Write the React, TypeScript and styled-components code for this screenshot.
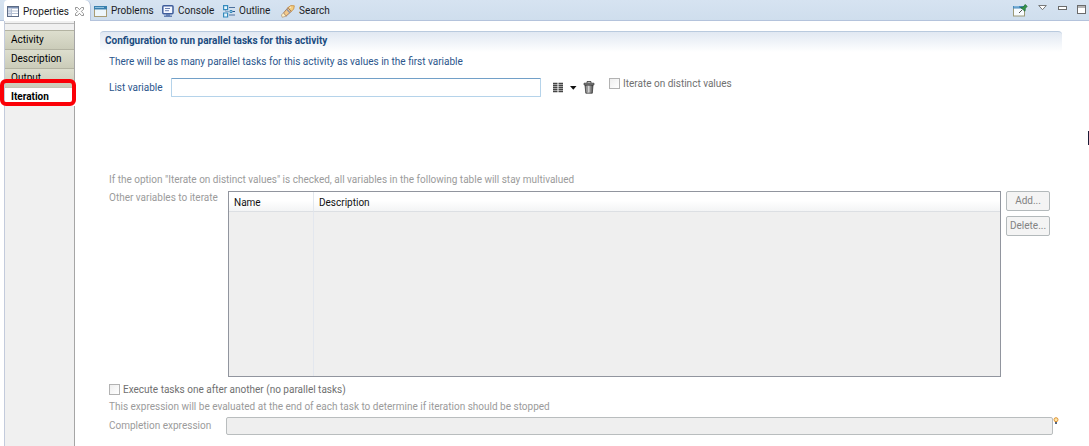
import React from "react";
import styled, { createGlobalStyle } from "styled-components";

const GlobalStyle = createGlobalStyle`
  *, *::before, *::after { box-sizing: border-box; }
  html, body { margin: 0; background: #ffffff; }
  body, button, input, table { font-family: Roboto, "Open Sans", sans-serif; font-size: 10px; line-height: 14px; }
  p, h1, ul { margin: 0; padding: 0; }
`;

const View = styled.div`
  display: flex;
  flex-direction: column;
  min-height: 100vh;
  position: relative;
  overflow: hidden;
`;

const TabBar = styled.header`
  display: flex;
  align-items: stretch;
  height: 21px;
  padding-left: 4px;
  background: linear-gradient(#d6e3f1, #cfdeed);
  border-bottom: 1px solid #b4c3dc;
`;

const Tabs = styled.nav`
  display: flex;
  align-items: stretch;
`;

const Tab = styled.button<{ $active?: boolean; $width: number }>`
  display: flex;
  align-items: center;
  gap: 4px;
  width: ${(p) => p.$width}px;
  height: ${(p) => (p.$active ? 21 : 20)}px;
  padding: 2px 0 0 3px;
  border: 0;
  border-right: ${(p) => (p.$active ? "1px solid #b4c3dc" : "0")};
  border-radius: 4px 6px 0 0;
  background: ${(p) => (p.$active ? "#ffffff" : "transparent")};
  color: #1c1c24;
  white-space: nowrap;
  svg { flex: none; }
  svg:last-child { margin-left: 2px; }
`;

const ViewActions = styled.div`
  display: flex;
  align-items: flex-start;
  margin-left: auto;
  padding: 4px 2px 0 0;
  gap: 10px;
`;

const IconButton = styled.button`
  display: flex;
  flex: none;
  padding: 0;
  border: 0;
  background: transparent;
  svg { display: block; }
`;

const Body = styled.div`
  display: flex;
  flex: 1;
`;

const Sidebar = styled.nav`
  flex: none;
  width: 71px;
  margin-left: 4px;
  padding-top: 2px;
  border-left: 1px solid #c3cbdc;
  border-right: 1px solid #a5a5a5;
  background: #f0f0f0;
`;

const SideList = styled.ul`
  list-style: none;
  border-top: 1px solid #bdbdbd;
`;

const SideItem = styled.li`
  position: relative;
  &:first-child { margin-top: 6px; }
`;

const SideButton = styled.button<{ $active?: boolean }>`
  display: block;
  width: ${(p) => (p.$active ? 70 : 69)}px;
  height: 19px;
  padding: 0 0 0 6px;
  border: 0;
  border-top: 1px solid ${(p) => (p.$active ? "#c4c4b4" : "#b3b3a2")};
  background: ${(p) => (p.$active ? "#ffffff" : "linear-gradient(#dddece, #cbccb9)")};
  color: #000000;
  font-weight: ${(p) => (p.$active ? 700 : 400)};
  text-align: left;
`;

const Highlight = styled.span`
  position: absolute;
  inset: -8px -2px 0 -5px;
  border: 4px solid #fb0007;
  border-radius: 6px;
  pointer-events: none;
`;

const Main = styled.main`
  flex: 1;
  min-width: 0;
  padding: 10px 27px 0 25px;
`;

const SectionTitle = styled.h1`
  height: 21px;
  padding: 2px 0 0 5px;
  border-top: 1px solid #b9cade;
  border-radius: 4px 4px 0 0;
  background: linear-gradient(#e1e8f2, #ffffff);
  color: #1b4c80;
  font-size: 10px;
  font-weight: 700;
  line-height: 14px;
`;

const Form = styled.form`
  padding: 3px 0 0 9px;
`;

const Line = styled.p<{ $muted?: boolean }>`
  color: ${(p) => (p.$muted ? "#9b9b9b" : "#2b568c")};
`;

const VariableRow = styled.div`
  display: flex;
  align-items: center;
  height: 19px;
  margin: 9px 0 76px;
`;

const Label = styled.label<{ $muted?: boolean; $width: number }>`
  flex: none;
  width: ${(p) => p.$width}px;
  color: ${(p) => (p.$muted ? "#9b9b9b" : "#2b568c")};
  white-space: nowrap;
`;

const ListInput = styled.input`
  flex: 0 1 370px;
  min-width: 0;
  height: 19px;
  padding: 0 4px;
  border: 1px solid #b5d3ea;
  border-top-color: #72a0c8;
  border-radius: 1px;
  background: #ffffff;
`;

const Tools = styled.div`
  display: flex;
  align-items: center;
  gap: 6px;
  margin: 0 14px 0 11px;
`;

const CheckLabel = styled.label<{ $raised?: boolean }>`
  display: flex;
  align-items: center;
  gap: 3px;
  align-self: ${(p) => (p.$raised ? "flex-start" : "auto")};
  height: 11px;
  color: #707070;
`;

const CheckBox = styled.input`
  appearance: none;
  width: 11px;
  height: 11px;
  margin: 0;
  border: 1px solid #b2b2b2;
  background: linear-gradient(135deg, #eeeeee, #ffffff);
`;

const TableRow = styled.div`
  display: flex;
  align-items: flex-start;
  margin: 4px 12px 7px 0;
`;

const TableFrame = styled.div`
  flex: 1;
  height: 186px;
  border: 1px solid #91959e;
  background: #efefef;
`;

const Table = styled.table`
  width: 100%;
  height: 100%;
  table-layout: fixed;
  border-collapse: separate;
  border-spacing: 0;
  th {
    height: 20px;
    padding: 2px 5px 0;
    border-right: 1px solid #e3e8ee;
    border-bottom: 1px solid #dcdfe3;
    background: linear-gradient(#ffffff 45%, #f3f4f5);
    color: #111111;
    font-weight: 400;
    text-align: left;
  }
  th:first-child { width: 85px; }
  td { border-right: 1px solid #e3e7ee; padding: 0; }
  th:last-child, td:last-child { border-right: 0; }
`;

const ButtonColumn = styled.div`
  display: flex;
  flex-direction: column;
  gap: 5px;
  width: 44px;
  margin-left: 5px;
`;

const PushButton = styled.button`
  height: 20px;
  padding: 0;
  border: 1px solid #b3b9bb;
  border-radius: 2px;
  background: #f4f4f4;
  color: #838383;
  white-space: nowrap;
`;

const ExpressionRow = styled.div`
  display: flex;
  align-items: center;
  margin: 3px 3px 0 0;
`;

const ExpressionInput = styled.input`
  flex: 1;
  min-width: 0;
  height: 18px;
  border: 1px solid #b9bdbe;
  border-radius: 2px;
  background: #efefef;
`;

const Bulb = styled.svg`
  align-self: flex-start;
  flex: none;
`;

const CheckRow = styled.div`
  margin-bottom: 5px;
`;

const EdgeMark = styled.span`
  position: absolute;
  top: 131px;
  right: 0;
  width: 1px;
  height: 14px;
  background: #1c1c38;
`;

const PropertiesIcon = () => (
  <svg width="12" height="11" viewBox="0 0 12 11" aria-hidden="true">
    <rect x=".5" y=".5" width="11" height="10" fill="#fff" stroke="#5d6c86" />
    <path d="M1 1h10v1.5H1z" fill="#7c91b5" />
    <path d="M1 2.5h3V10H1z" fill="#d7dfed" />
    <path d="M4.5 2.5V10M1 5h10M1 7.5h10" stroke="#b5c0d3" fill="none" />
  </svg>
);
const CloseIcon = () => (
  <svg width="9" height="9" viewBox="0 0 9 9" aria-hidden="true">
    <path d="M.5.5h2l2 2.2 2-2.2h2v1.8L6.3 4.5l2.2 2.2v1.8h-2l-2-2.2-2 2.2h-2V6.7l2.2-2.2L.5 2.3z" fill="#fff" stroke="#7b7b7b" strokeWidth=".8" />
  </svg>
);
const ProblemsIcon = () => (
  <svg width="13" height="11" viewBox="0 0 13 11" aria-hidden="true">
    <rect x=".5" y=".5" width="12" height="10" fill="#fff" stroke="#a99c74" />
    <path d="M0 0h13v3.5H0z" fill="#397fae" />
    <path d="M1 1h9v.8H1z" fill="#a6d2ec" />
    <path d="M1 4h11v6H1z" fill="#eef6fb" />
  </svg>
);
const ConsoleIcon = () => (
  <svg width="12" height="12" viewBox="0 0 12 12" aria-hidden="true">
    <rect x=".8" y=".8" width="10.2" height="8" rx="1" fill="#f3f7ff" stroke="#3e5d9b" strokeWidth="1.5" />
    <path d="M3 3.5h5M3 5.7h4" stroke="#6a7fae" />
    <path d="M4 9h4v1.5h2V12H2v-1.5h2z" fill="#6480b3" />
  </svg>
);
const OutlineIcon = () => (
  <svg width="12" height="13" viewBox="0 0 12 13" aria-hidden="true">
    <path d="M.6.6h4v4h-4zM.6 8h4v4h-4z" fill="#e6f5fc" stroke="#348abd" strokeWidth="1.2" />
    <path d="M6 2.5h6M6 10h6" stroke="#4d719d" fill="none" />
    <path d="M2.5 5v1.5H6" stroke="#8aa8c8" fill="none" />
    <path d="M7 5.5h2v2H7z" fill="#c7e7f6" stroke="#358abb" />
    <path d="M9.5 6.5H12" stroke="#27568d" />
  </svg>
);
const SearchIcon = () => (
  <svg width="14" height="13" viewBox="0 0 14 13" aria-hidden="true">
    <path d="M7 2.6 9.8.6 13.3.8 12.7 4 10.2 6.5z" fill="#f4cf82" stroke="#c6893a" strokeWidth=".8" />
    <path d="M7 2.6 10.2 6.5 5 11.2 2.5 8z" fill="#f3c98a" stroke="#976b47" strokeWidth=".8" />
    <path d="m5.8 4.3 3.2 3.6" stroke="#8b93a8" strokeWidth="1.4" />
    <path d="m2.5 8-2.1 1.8.8 2.5 3.8-1.1z" fill="#fff2c6" stroke="#b29b81" strokeWidth=".8" />
    <path d="m8.5 3 1.2-.9" stroke="#fff" />
  </svg>
);
const PinIcon = () => (
  <svg width="15" height="13" viewBox="0 0 15 13" aria-hidden="true">
    <rect x=".5" y="2.5" width="11" height="9.5" fill="#f8fcff" stroke="#9c9a78" />
    <path d="M0 2h12v2.5H0z" fill="#4789bc" />
    <path d="M1 2.5h5v.8H1z" fill="#b5daf0" />
    <path d="m6 9 3-3" stroke="#555" />
    <path d="m7.5 3.5 3-.5L12 .5l2.2 1.8-1.8 2-.4 2.9z" fill="#36964b" stroke="#1a6832" strokeWidth=".7" />
  </svg>
);
const MenuIcon = () => (
  <svg width="9" height="7" viewBox="0 0 9 7" aria-hidden="true">
    <path d="M.7 1.5h7.6L4.5 5.7z" fill="#fff" stroke="#6b6b6b" strokeWidth=".9" />
  </svg>
);
const MinimizeIcon = () => (
  <svg width="10" height="6" viewBox="0 0 10 6" aria-hidden="true">
    <rect x="1.5" y="2.5" width="8" height="3" fill="#fff" stroke="#6b6b6b" />
  </svg>
);
const MaximizeIcon = () => (
  <svg width="10" height="11" viewBox="0 0 10 11" aria-hidden="true">
    <rect x=".5" y="1.5" width="8" height="8" fill="#fff" stroke="#6b6b6b" />
    <path d="M.5 3H9" stroke="#6b6b6b" />
  </svg>
);
const ColumnsIcon = () => (
  <svg width="12" height="11" viewBox="0 0 12 11" aria-hidden="true">
    <path d="M1 1.5h4.5M6.5 1.5H11M1 3.5h4.5M6.5 3.5H11M1 5.5h4.5M6.5 5.5H11M1 7.5h4.5M6.5 7.5H11M1 9.5h4.5M6.5 9.5H11" stroke="#444" strokeWidth="1.3" />
  </svg>
);
const ArrowIcon = () => (
  <svg width="7" height="4" viewBox="0 0 7 4" aria-hidden="true">
    <path d="M0 0h6.5L3.3 3.8z" fill="#111" />
  </svg>
);
const TrashIcon = () => (
  <svg width="12" height="13" viewBox="0 0 12 13" aria-hidden="true">
    <defs>
      <linearGradient id="can">
        <stop offset="0" stopColor="#555" />
        <stop offset=".4" stopColor="#ddd" />
        <stop offset="1" stopColor="#444" />
      </linearGradient>
    </defs>
    <path d="M2 4h8l-.7 8.2H2.8z" fill="url(#can)" stroke="#3b3b3b" strokeWidth=".8" />
    <path d="M4.5 5v6M8 5v6" stroke="#777" strokeWidth=".5" />
    <path d="M1 2.2h10v1.7H1z" fill="#888" stroke="#333" strokeWidth=".7" />
    <path d="M4 1.8V.7h4v1.1" fill="none" stroke="#333" />
  </svg>
);

const sections = ["Activity", "Description", "Output", "Iteration"];

export default function App() {
  return (
    <>
      <GlobalStyle />
      <View>
        <TabBar>
          <Tabs aria-label="Views">
            <Tab $active $width={87}><PropertiesIcon />Properties<CloseIcon /></Tab>
            <Tab $width={68}><ProblemsIcon /><span>Problems</span></Tab>
            <Tab $width={61}><ConsoleIcon /><span>Console</span></Tab>
            <Tab $width={58}><OutlineIcon /><span>Outline</span></Tab>
            <Tab $width={56}><SearchIcon /><span>Search</span></Tab>
          </Tabs>
          <ViewActions>
            <IconButton aria-label="Pin to selection"><PinIcon /></IconButton>
            <IconButton aria-label="View menu"><MenuIcon /></IconButton>
            <IconButton aria-label="Minimize"><MinimizeIcon /></IconButton>
            <IconButton aria-label="Maximize"><MaximizeIcon /></IconButton>
          </ViewActions>
        </TabBar>
        <Body>
          <Sidebar aria-label="Property sections">
            <SideList>
              {sections.map((name) => (
                <SideItem key={name}>
                  <SideButton $active={name === "Iteration"}>{name}</SideButton>
                  {name === "Iteration" && <Highlight />}
                </SideItem>
              ))}
            </SideList>
          </Sidebar>
          <Main>
            <SectionTitle>Configuration to run parallel tasks for this activity</SectionTitle>
            <Form onSubmit={(e) => e.preventDefault()}>
              <Line>There will be as many parallel tasks for this activity as values in the first variable</Line>
              <VariableRow>
                <Label htmlFor="list" $width={62}>List variable</Label>
                <ListInput id="list" type="text" />
                <Tools>
                  <IconButton type="button" aria-label="Choose list"><ColumnsIcon /></IconButton>
                  <IconButton type="button" aria-label="More choices"><ArrowIcon /></IconButton>
                  <IconButton type="button" aria-label="Clear"><TrashIcon /></IconButton>
                </Tools>
                <CheckLabel $raised><CheckBox type="checkbox" />Iterate on distinct values</CheckLabel>
              </VariableRow>
              <Line $muted>If the option "Iterate on distinct values" is checked, all variables in the following table will stay multivalued</Line>
              <TableRow>
                <Label as="span" $muted $width={119}>Other variables to iterate</Label>
                <TableFrame>
                  <Table aria-label="Other variables to iterate">
                    <thead><tr><th>Name</th><th>Description</th></tr></thead>
                    <tbody><tr><td /><td /></tr></tbody>
                  </Table>
                </TableFrame>
                <ButtonColumn>
                  <PushButton type="button" disabled>Add...</PushButton>
                  <PushButton type="button" disabled>Delete...</PushButton>
                </ButtonColumn>
              </TableRow>
              <CheckRow>
                <CheckLabel><CheckBox type="checkbox" />Execute tasks one after another (no parallel tasks)</CheckLabel>
              </CheckRow>
              <Line $muted>This expression will be evaluated at the end of each task to determine if iteration should be stopped</Line>
              <ExpressionRow>
                <Label htmlFor="completion" $muted $width={117}>Completion expression</Label>
                <ExpressionInput id="completion" type="text" disabled />
                <Bulb width="6" height="8" viewBox="0 0 6 8" aria-hidden="true">
                  <circle cx="3" cy="2.7" r="2" fill="#ffe6a8" stroke="#dc9132" />
                  <path d="M2 5h2v2H2z" fill="#56667e" />
                </Bulb>
              </ExpressionRow>
            </Form>
          </Main>
        </Body>
        <EdgeMark />
      </View>
    </>
  );
}
